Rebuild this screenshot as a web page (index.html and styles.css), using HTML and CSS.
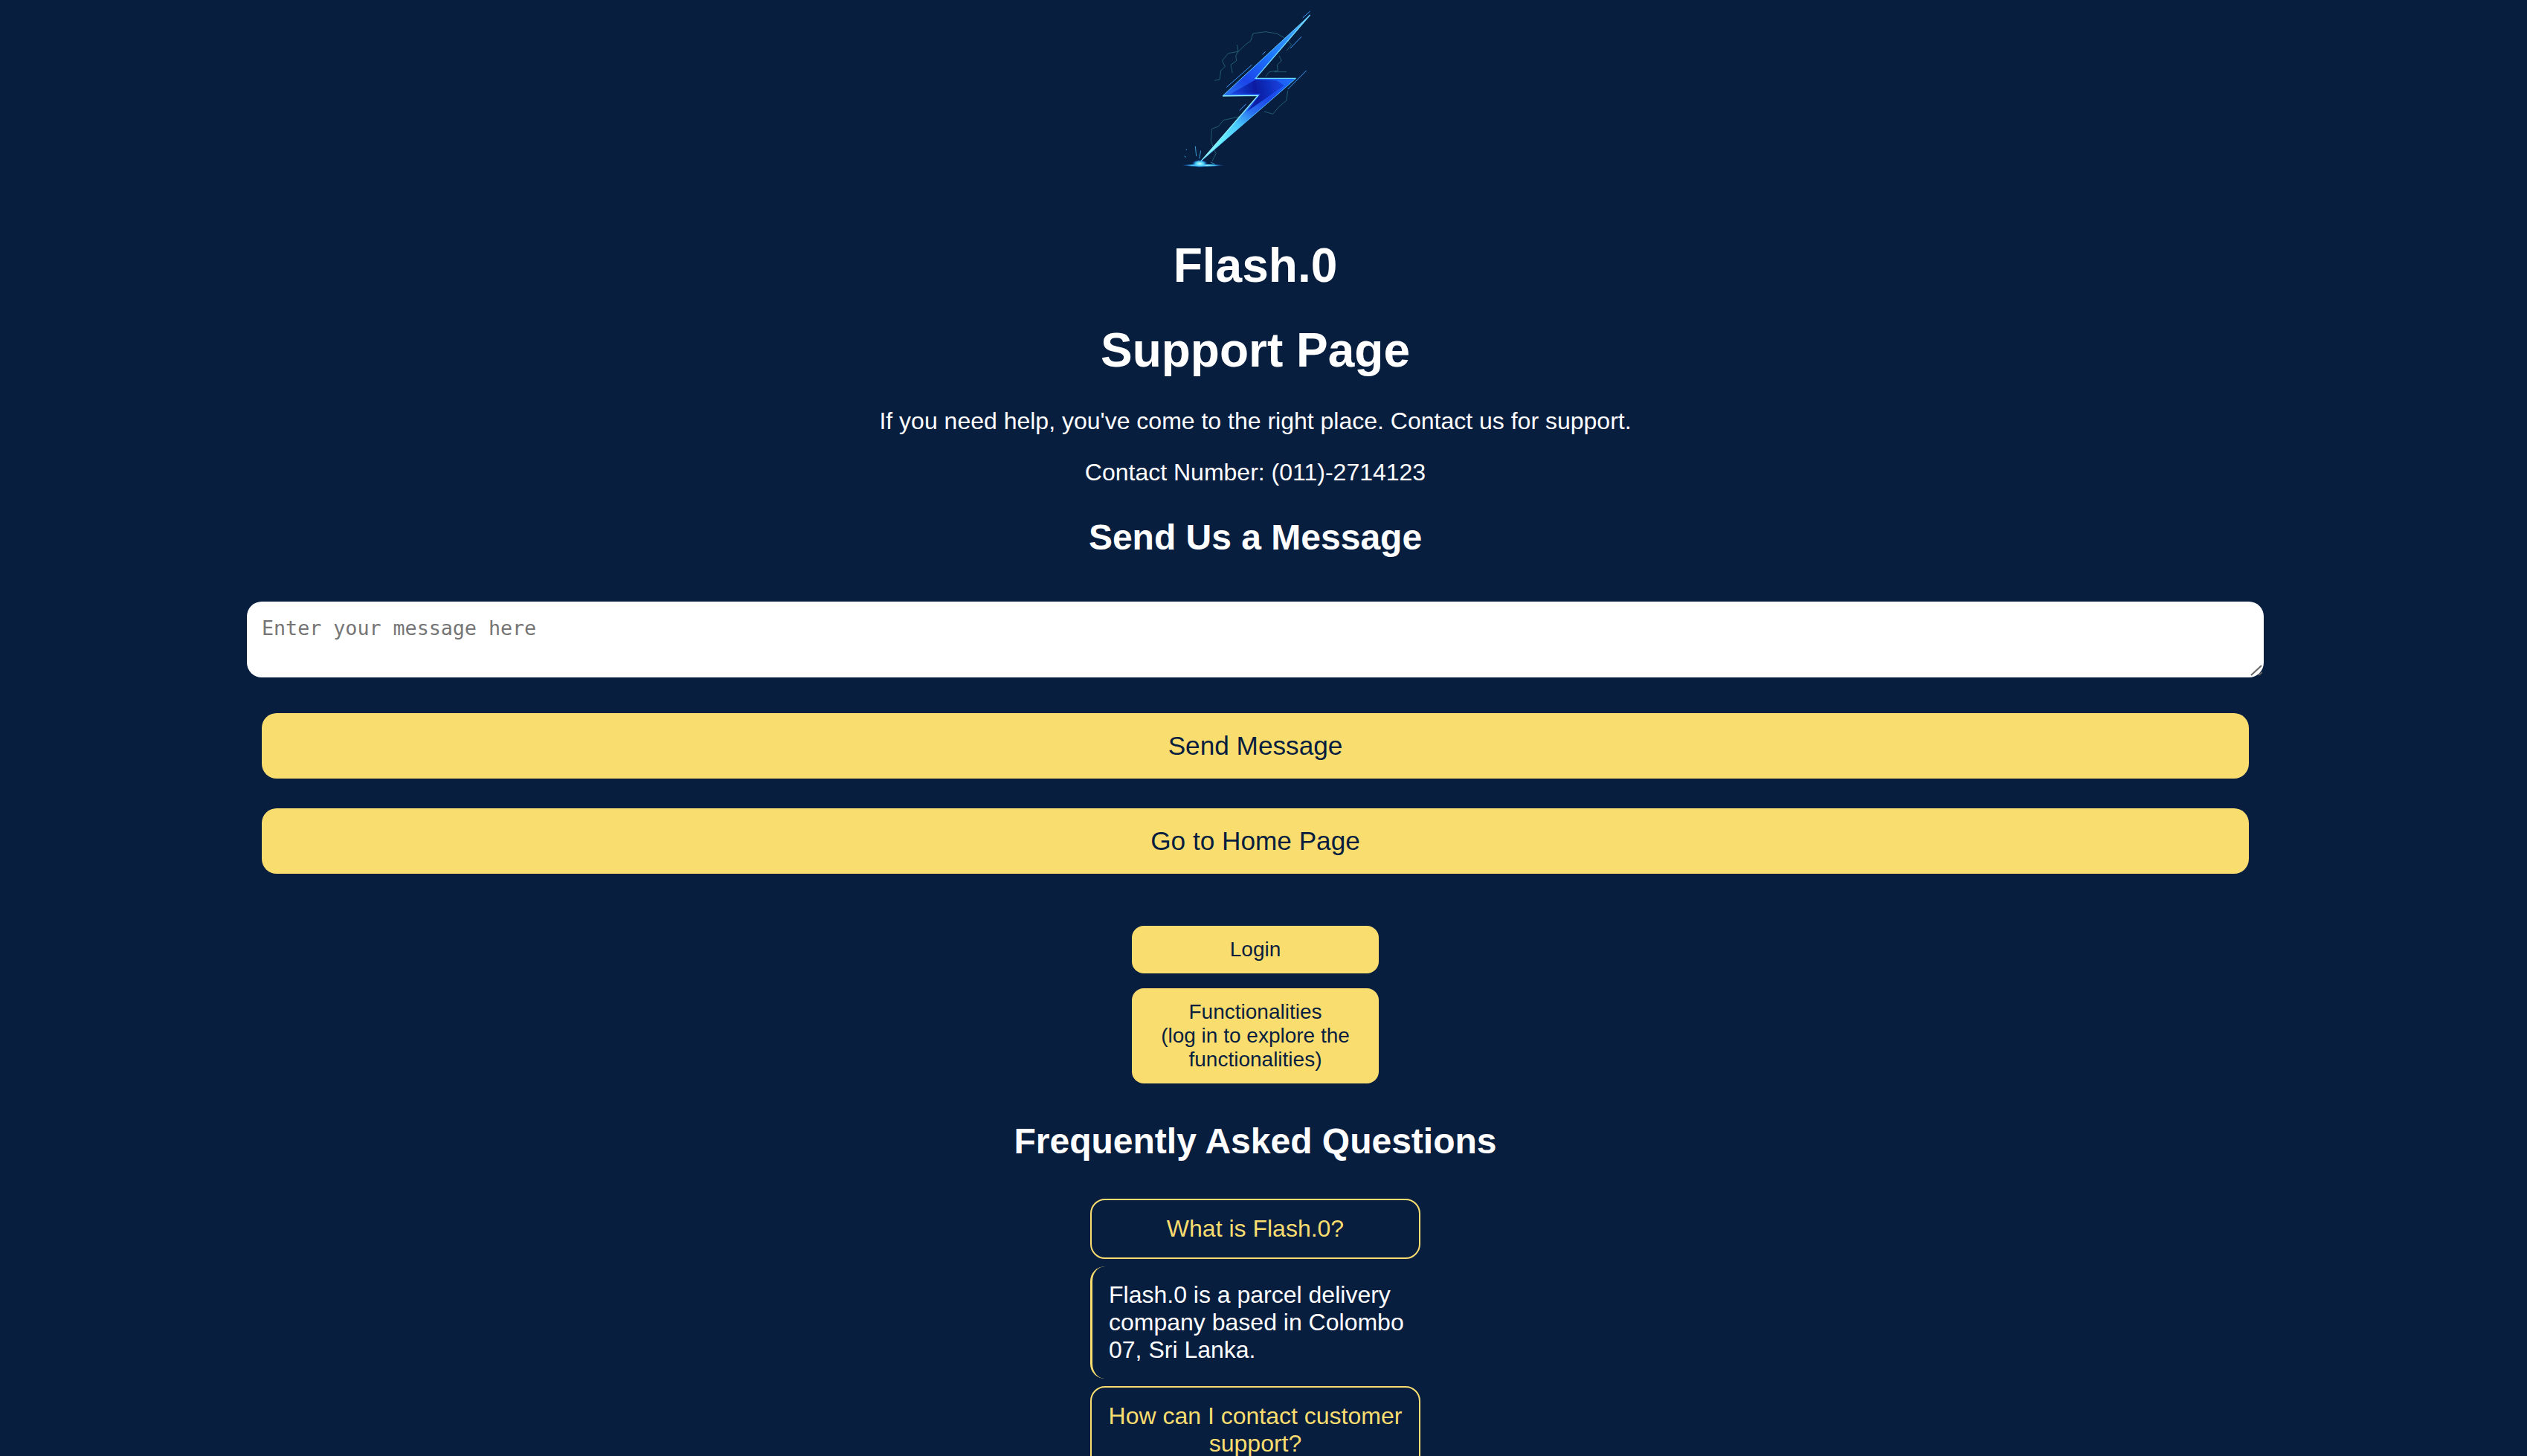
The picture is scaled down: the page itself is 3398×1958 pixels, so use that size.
FILE: index.html
```html
<!DOCTYPE html>
<html lang="en">
<head>
    <meta charset="UTF-8">
    <meta name="viewport" content="width=device-width, initial-scale=1.0">
    <title>Support Page</title>
    <link rel="stylesheet" href="styles.css">
</head>
<body>

<!-- Logo -->
<svg class="logo" viewBox="-36 0 1200 750" aria-label="Flash.0 logo">
    <defs>
        <linearGradient id="boltFill" x1="785" y1="60" x2="345" y2="650" gradientUnits="userSpaceOnUse">
            <stop offset="0" stop-color="#8fe8ff"/>
            <stop offset="0.12" stop-color="#3aa0ff"/>
            <stop offset="0.3" stop-color="#1e78ff"/>
            <stop offset="0.5" stop-color="#1a44e8"/>
            <stop offset="0.62" stop-color="#2a70f0"/>
            <stop offset="0.72" stop-color="#48c8fa"/>
            <stop offset="0.85" stop-color="#6af0ff"/>
            <stop offset="1" stop-color="#9ffaff"/>
        </linearGradient>
        <linearGradient id="boltCore" x1="450" y1="380" x2="700" y2="330" gradientUnits="userSpaceOnUse">
            <stop offset="0" stop-color="#1c4cf0"/>
            <stop offset="0.45" stop-color="#0a1ca0"/>
            <stop offset="1" stop-color="#1a4cf0"/>
        </linearGradient>
        <radialGradient id="sparkGlow">
            <stop offset="0" stop-color="#d0fdff"/>
            <stop offset="0.55" stop-color="#46d8ff" stop-opacity="0.9"/>
            <stop offset="1" stop-color="#1a5cff" stop-opacity="0"/>
        </radialGradient>
        <filter id="soft"><feGaussianBlur stdDeviation="1.2"/></filter>
    </defs>

    <!-- thin arcs around the bolt -->
    <g fill="none" stroke="#2f7a8c" stroke-width="2" filter="url(#soft)">
        <path d="M400 325 L420 320 L425 285 L442 268 L430 245 L455 215 L495 208 L525 180 L545 165 L555 135 L605 128 L650 135 L685 155 L710 180 L690 205"/>
        <path d="M490 180 L495 208 L485 225 L488 245 L465 262 L472 295"/>
        <path d="M660 225 L670 245 L652 262 L655 285 L620 290 L605 310"/>
        <path d="M640 290 L690 290 M695 365 L690 405 L660 430 L635 460 L600 450"/>
        <path d="M540 462 L480 475 L435 485 L415 510 L388 520 L385 570 L405 620 L390 650"/>
    </g>

    <!-- bolt -->
    <polygon points="785,60 432,387 575,385 345,650 728,316 565,316" fill="url(#boltFill)" filter="url(#soft)"/>
    <polygon points="565,322 465,378 585,378 530,450 680,345 650,325" fill="url(#boltCore)" filter="url(#soft)"/>
    <path d="M432 387 L575 385 L345 650" fill="none" stroke="#8cf0ff" stroke-width="4"/>
    <path d="M785 60 L565 316 L728 316" fill="none" stroke="#6cd8ff" stroke-width="4"/>
    <path d="M785 60 L432 387" fill="none" stroke="#5cc4ff" stroke-width="3"/>
    <path d="M728 316 L345 650" fill="none" stroke="#4cc0ff" stroke-width="3"/>

    <!-- streaks -->
    <g stroke="#3f9cff" stroke-width="3" filter="url(#soft)">
        <path d="M755 72 L785 45"/>
        <path d="M705 195 L750 148"/>
        <path d="M695 360 L770 285"/>
        <path d="M448 352 L550 262"/>
        <path d="M592 220 L605 208"/>
        <path d="M500 446 L526 420"/>
    </g>

    <!-- sparks at the strike point -->
    <ellipse cx="352" cy="667" rx="85" ry="6" fill="url(#sparkGlow)"/>
    <ellipse cx="340" cy="660" rx="32" ry="16" fill="url(#sparkGlow)"/>
    <g stroke="#3fb8f0" stroke-width="2.5" filter="url(#soft)">
        <path d="M322 590 L326 630"/>
        <path d="M344 608 L338 640"/>
        <path d="M285 602 L287 606"/>
        <path d="M278 630 L284 634"/>
        <path d="M385 655 L400 662"/>
    </g>
</svg>

<h2 class="brand">Flash.0</h2>
<h1 class="page-title">Support Page</h1>
<p class="intro">If you need help, you've come to the right place. Contact us for support.</p>
<p class="contact">Contact Number: (011)-2714123</p>

<!-- Message form -->
<h3 class="section-title">Send Us a Message</h3>
<form class="message-form">
    <div class="message-wrap">
        <textarea class="message-box" placeholder="Enter your message here"></textarea>
        <svg class="resize-handle" viewBox="0 0 18 18">
            <path d="M3 17 L17 4 M13 17 L18 13" stroke="#666" stroke-width="2" fill="none"/>
        </svg>
    </div>
    <button type="button" class="wide-btn">Send Message</button>
    <button type="button" class="wide-btn">Go to Home Page</button>
</form>

<!-- Nav buttons -->
<div class="nav-buttons">
    <button type="button" class="small-btn">Login</button>
    <button type="button" class="small-btn">Functionalities<br>(log in to explore the functionalities)</button>
</div>

<!-- FAQ -->
<h3 class="section-title faq-title">Frequently Asked Questions</h3>
<div class="faq">
    <button type="button" class="faq-question">What is Flash.0?</button>
    <div class="faq-answer">Flash.0 is a parcel delivery company based in Colombo 07, Sri Lanka.</div>
    <button type="button" class="faq-question">How can I contact customer support?</button>
</div>

</body>
</html>
```

FILE: styles.css
```css
html, body { height: 100%; overflow: hidden; }
body { margin: 0; padding-right: 22px; background-color: #081e3f; color: #fff; font-family: "Liberation Sans", Arial, sans-serif; text-align: center; }
.logo { display: block; width: 400px; height: 250px; margin: 0 auto; }
.brand { font-size: 64px; line-height: 74px; margin: 70px 0 0; }
.page-title { font-size: 64px; line-height: 74px; margin: 40px 0 0; }
.intro { font-size: 32px; line-height: 37px; margin: 40px 0 0; }
.contact { font-size: 32px; line-height: 37px; margin: 32px 0 0; }
.section-title { font-size: 48px; line-height: 56px; margin: 41px 0 0; }
.message-form { margin-top: 58px; }
.message-wrap { position: relative; width: 2712px; margin: 0 auto; }
.message-box { display: block; box-sizing: border-box; width: 100%; height: 102px; padding: 20px; border: none; border-radius: 20px; background: #fff; font-family: "DejaVu Sans Mono", monospace; font-size: 26.67px; line-height: 31px; resize: none; }
.resize-handle { position: absolute; right: 2px; bottom: 2px; width: 18px; height: 18px; pointer-events: none; }
.wide-btn { display: block; width: 2672px; height: 88px; margin: 48px auto 0; border: none; border-radius: 20px; background-color: #f9dd6f; color: #081e3f; font-family: inherit; font-size: 35.2px; }
.wide-btn + .wide-btn { margin-top: 40px; }
.nav-buttons { display: flex; flex-direction: column; align-items: center; gap: 20px; margin-top: 70px; }
.small-btn { box-sizing: border-box; width: 332px; padding: 16px 20px; border: none; border-radius: 16px; background-color: #f9dd6f; color: #081e3f; font-family: inherit; font-size: 28px; line-height: 32px; }
.faq-title { margin-top: 50px; }
.faq { display: flex; flex-direction: column; align-items: center; gap: 10px; margin-top: 49px; }
.faq-question { box-sizing: border-box; width: 444px; padding: 20px; border: 2px solid #f9dd6f; border-radius: 20px; background: transparent; color: #f9dd6f; font-family: inherit; font-size: 32px; line-height: 37px; }
.faq-answer { box-sizing: border-box; width: 444px; padding: 20px 22px; border-left: 3px solid #f9dd6f; border-radius: 20px; text-align: left; font-size: 32px; line-height: 37px; }
```
